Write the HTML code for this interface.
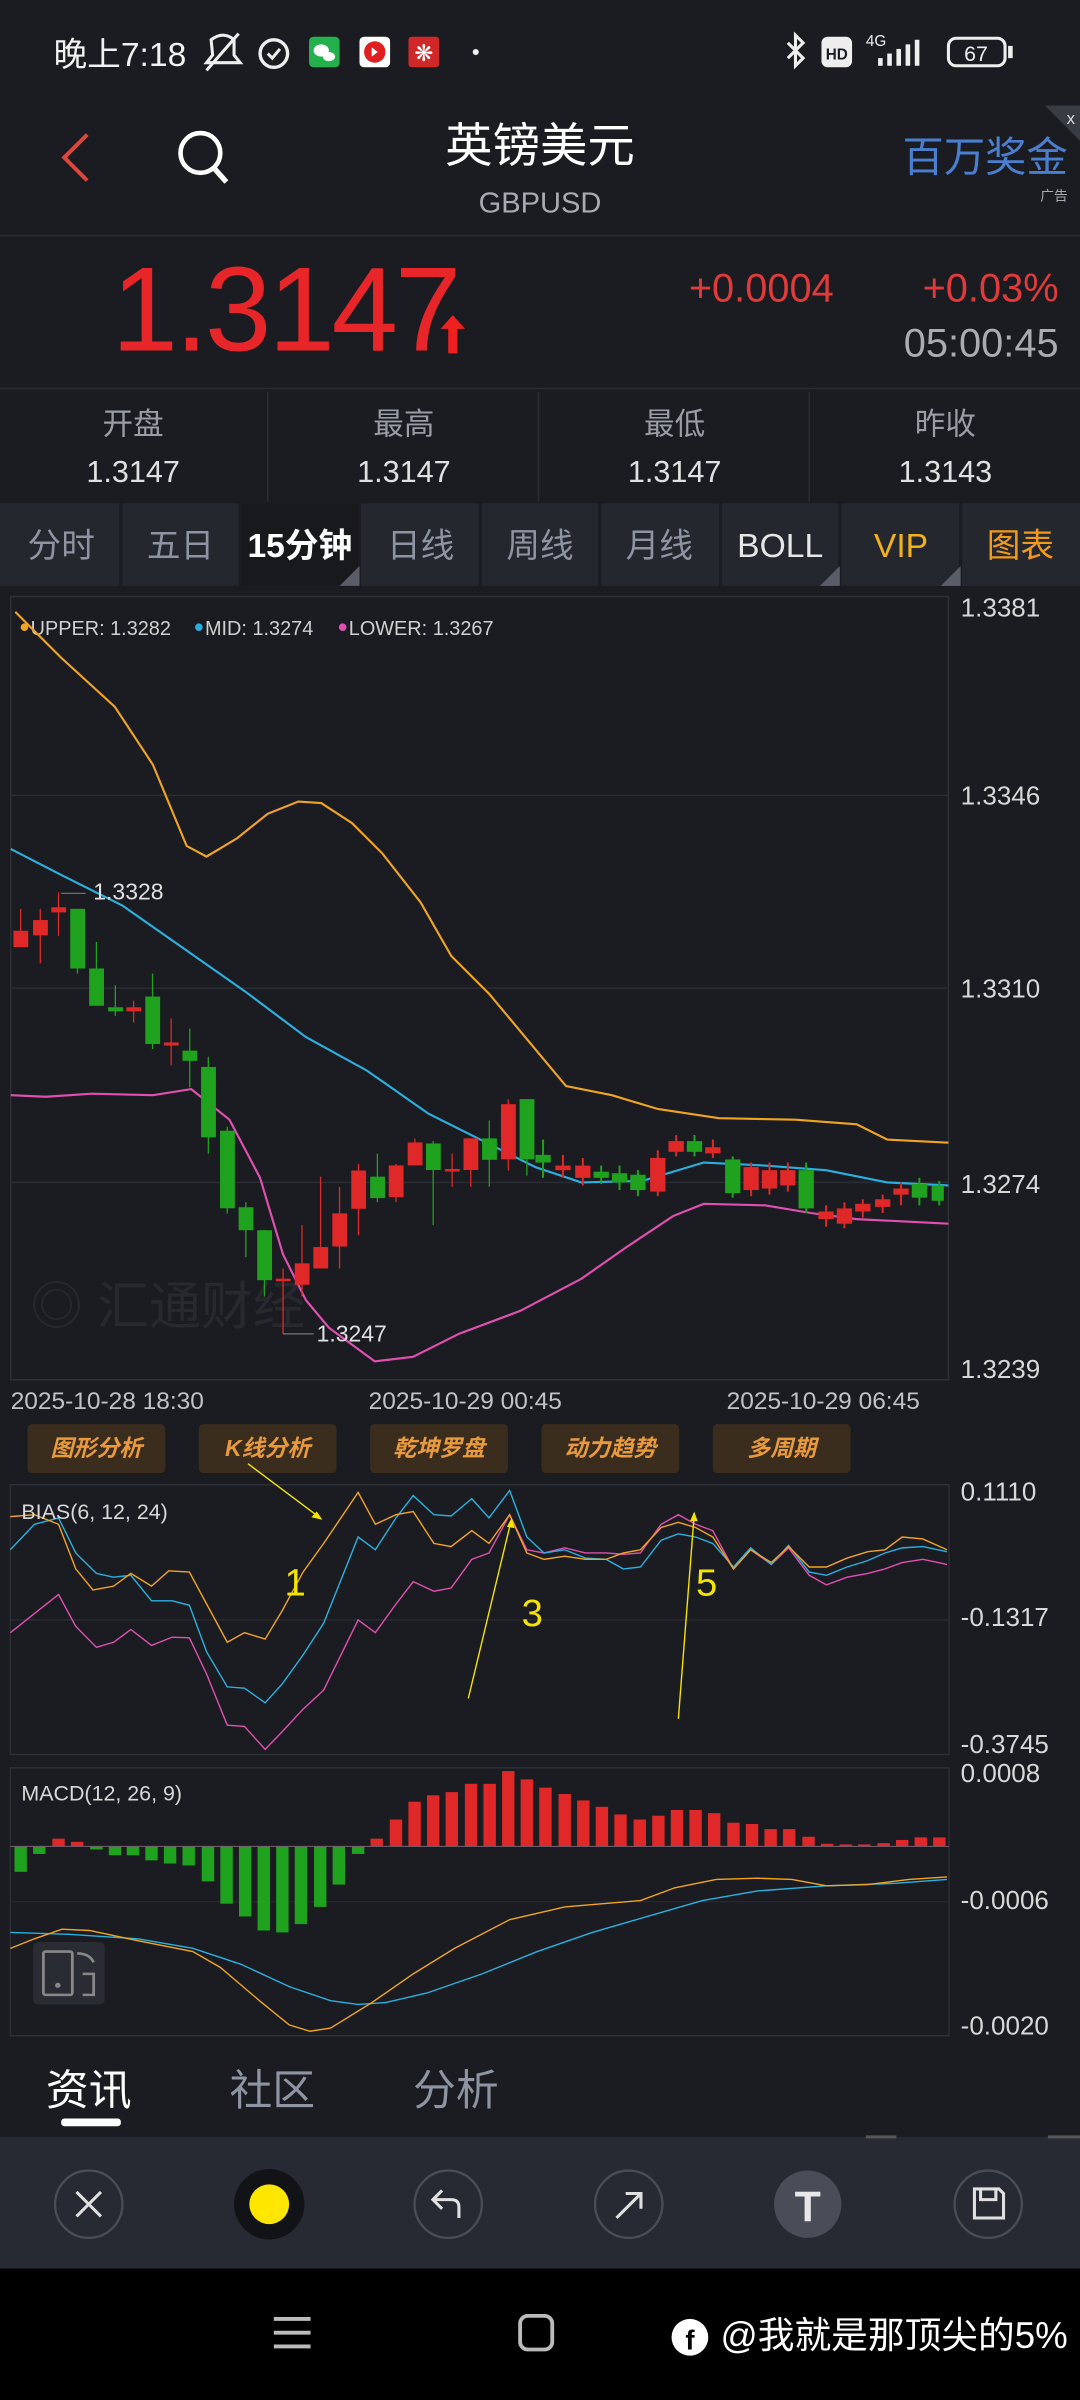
<!DOCTYPE html>
<html><head><meta charset="utf-8"><style>
html,body{margin:0;padding:0;background:#1b1c21;}
svg{display:block}
text{font-family:"Liberation Sans","Noto Sans CJK SC",sans-serif}
</style></head><body>
<svg width="1080" height="2400" viewBox="0 0 706 1569" preserveAspectRatio="none" xmlns="http://www.w3.org/2000/svg">
<rect x="0" y="0" width="706" height="1569" fill="#1b1c21"/>
<!-- status bar -->
<text x="35" y="43" font-size="22" fill="#f2f2f2">晚上7:18</text>
<path d="M138 26 q8 -6 15 0 v10 l4 5 h-22 l4 -5z M135 46 L156 22" stroke="#eee" stroke-width="2" fill="none"/>
<circle cx="179" cy="35" r="9" stroke="#eee" stroke-width="2.2" fill="none"/><path d="M175 35 l3 3 l5 -6" stroke="#eee" stroke-width="2" fill="none"/>
<rect x="202" y="24" width="20" height="20" rx="3" fill="#22b14c"/><ellipse cx="210" cy="33" rx="5" ry="4" fill="#fff"/><ellipse cx="215" cy="37" rx="4" ry="3" fill="#fff"/>
<rect x="235" y="24" width="20" height="20" rx="3" fill="#fff"/><circle cx="245" cy="34" r="7" fill="#e02020"/><path d="M243 31 l4 3 l-4 3z" fill="#fff"/>
<rect x="267" y="24" width="20" height="20" rx="2" fill="#d02828"/><text x="277" y="40" font-size="15" fill="#fff" text-anchor="middle">❋</text>
<circle cx="311" cy="34" r="2" fill="#eee"/>
<path d="M515 28 l10 10 l-5 5 v-20 l5 5 l-10 10" stroke="#eee" stroke-width="2" fill="none"/>
<rect x="537" y="24" width="20" height="20" rx="4" fill="#eee"/><text x="547" y="39" font-size="10" font-weight="bold" fill="#1b1c21" text-anchor="middle">HD</text>
<text x="566" y="30" font-size="10" fill="#eee">4G</text>
<rect x="574" y="38" width="3" height="5" fill="#eee"/><rect x="580" y="35" width="3" height="8" fill="#eee"/><rect x="586" y="32" width="3" height="11" fill="#eee"/><rect x="592" y="29" width="3" height="14" fill="#eee"/><rect x="598" y="26" width="3" height="17" fill="#eee"/>
<rect x="620" y="25" width="37" height="18" rx="5" stroke="#eee" stroke-width="2" fill="none"/><rect x="659" y="30" width="3" height="8" fill="#eee"/><text x="638" y="40" font-size="14" fill="#eee" text-anchor="middle">67</text>
<!-- header -->
<path d="M57 88 L42 103 L57 118" stroke="#e0453a" stroke-width="2.6" fill="none"/>
<circle cx="131" cy="100" r="13" stroke="#fff" stroke-width="3" fill="none"/><path d="M140 110 L148 119" stroke="#fff" stroke-width="3.5"/>
<text x="353" y="106" font-size="31" fill="#fff" text-anchor="middle">英镑美元</text>
<text x="353" y="139" font-size="19" fill="#a8abb3" text-anchor="middle">GBPUSD</text>
<text x="698" y="112" font-size="27" fill="#4a7fcf" text-anchor="end">百万奖金</text>
<text x="698" y="131" font-size="9" fill="#aaa" text-anchor="end">广告</text>
<path d="M683 69 L706 69 L706 92z" fill="#3a3c44"/><text x="700" y="81" font-size="11" fill="#ddd" text-anchor="middle">x</text>
<line x1="0" y1="154" x2="706" y2="154" stroke="#2a2c33"/>
<!-- price -->
<text x="73" y="229" font-size="78" fill="#e8262a" letter-spacing="-2">1.3147</text>
<path d="M296 206 l-8 9 h5 v16 h6 v-16 h5z" fill="#f02020"/>
<text x="545" y="197" font-size="26" fill="#e03a3a" text-anchor="end">+0.0004</text>
<text x="692" y="197" font-size="26" fill="#e03a3a" text-anchor="end">+0.03%</text>
<text x="692" y="233" font-size="26" fill="#a9acb3" text-anchor="end">05:00:45</text>
<line x1="0" y1="254" x2="706" y2="254" stroke="#2a2c33"/>
<g font-size="20" text-anchor="middle">
<text x="87" y="284" fill="#9a9da6">开盘</text><text x="87" y="315" fill="#e0e0e0">1.3147</text>
<text x="264" y="284" fill="#9a9da6">最高</text><text x="264" y="315" fill="#e0e0e0">1.3147</text>
<text x="441" y="284" fill="#9a9da6">最低</text><text x="441" y="315" fill="#e0e0e0">1.3147</text>
<text x="618" y="284" fill="#9a9da6">昨收</text><text x="618" y="315" fill="#e0e0e0">1.3143</text>
</g>
<line x1="175" y1="256" x2="175" y2="328" stroke="#2a2c33"/><line x1="352" y1="256" x2="352" y2="328" stroke="#2a2c33"/><line x1="529" y1="256" x2="529" y2="328" stroke="#2a2c33"/>
<!-- tabs -->
<rect x="0" y="329" width="706" height="54" fill="#25272f"/>
<rect x="157" y="329" width="78" height="54" fill="#18191d"/>
<g stroke="#1b1c21" stroke-width="2"><line x1="79" y1="329" x2="79" y2="383"/><line x1="157" y1="329" x2="157" y2="383"/><line x1="235" y1="329" x2="235" y2="383"/><line x1="314" y1="329" x2="314" y2="383"/><line x1="392" y1="329" x2="392" y2="383"/><line x1="471" y1="329" x2="471" y2="383"/><line x1="549" y1="329" x2="549" y2="383"/><line x1="628" y1="329" x2="628" y2="383"/></g>
<g font-size="22" text-anchor="middle">
<text x="40" y="364" fill="#8f94a3">分时</text><text x="118" y="364" fill="#8f94a3">五日</text>
<text x="196" y="364" fill="#fff" font-weight="bold">15分钟</text>
<text x="275" y="364" fill="#8f94a3">日线</text><text x="353" y="364" fill="#8f94a3">周线</text><text x="431" y="364" fill="#8f94a3">月线</text>
<text x="510" y="364" fill="#e6e6e6">BOLL</text><text x="589" y="364" fill="#f2b21a">VIP</text><text x="667" y="364" fill="#f29a1a">图表</text>
</g>
<path d="M235 370 v13 h-13z M549 370 v13 h-13z M628 370 v13 h-13z" fill="#5a5d68"/>
<!-- main chart -->
<rect x="7" y="390" width="613" height="512" fill="#1b1c21" stroke="#2e3038"/>
<g stroke="#2a2c33"><line x1="7" y1="520" x2="620" y2="520"/><line x1="7" y1="646" x2="620" y2="646"/><line x1="7" y1="773" x2="620" y2="773"/></g>
<g font-size="17" fill="#d8d8d8"><text x="628" y="403">1.3381</text><text x="628" y="526">1.3346</text><text x="628" y="652">1.3310</text><text x="628" y="780">1.3274</text><text x="628" y="901">1.3239</text></g>
<g font-size="13" fill="#d0d0d0"><circle cx="16" cy="410" r="2.5" fill="#f0a424"/><text x="20" y="415">UPPER: 1.3282</text><circle cx="130" cy="410" r="2.5" fill="#2ab0e0"/><text x="134" y="415">MID: 1.3274</text><circle cx="224" cy="410" r="2.5" fill="#e050b0"/><text x="228" y="415">LOWER: 1.3267</text></g>
<text x="20" y="866" font-size="34" fill="#28292e">◎ 汇通财经</text>
<polyline fill="none" stroke="#f0a424" stroke-width="1.4" points="10,400 40,430 75,462 100,500 122,553 135,560 155,548 175,532 195,524 210,525 230,538 250,558 275,590 295,625 320,650 345,680 370,710 400,716 430,725 470,731 520,732 560,735 580,745 620,747"/>
<polyline fill="none" stroke="#2ab0e0" stroke-width="1.4" points="7,555 40,572 80,592 120,620 160,648 200,678 240,700 280,728 320,748 350,763 380,773 420,772 460,760 500,762 540,765 580,773 620,775"/>
<polyline fill="none" stroke="#e050b0" stroke-width="1.4" points="7,716 30,717 60,715 100,716 125,712 150,732 170,770 185,820 200,850 215,868 245,890 270,887 300,872 340,857 380,836 410,815 440,795 460,787 500,788 530,793 560,797 620,800"/>
<g transform="translate(0,385.7) scale(0.2251,0.3335)" stroke-width="1.3">
<g vector-effect="non-scaling-stroke">
<line vector-effect="non-scaling-stroke" x1="60" y1="625" x2="60" y2="700" stroke="#e02828"/><rect x="39" y="668" width="43" height="32" fill="#e02828"/>
<line vector-effect="non-scaling-stroke" x1="117" y1="625" x2="117" y2="732" stroke="#e02828"/><rect x="96" y="647" width="43" height="30" fill="#e02828"/>
<line vector-effect="non-scaling-stroke" x1="170" y1="593" x2="170" y2="678" stroke="#e02828"/><rect x="149" y="622" width="43" height="10" fill="#e02828"/>
<line vector-effect="non-scaling-stroke" x1="225" y1="625" x2="225" y2="752" stroke="#1fa31f"/><rect x="204" y="625" width="43" height="117" fill="#1fa31f"/>
<line vector-effect="non-scaling-stroke" x1="280" y1="690" x2="280" y2="815" stroke="#1fa31f"/><rect x="259" y="742" width="43" height="73" fill="#1fa31f"/>
<line vector-effect="non-scaling-stroke" x1="335" y1="775" x2="335" y2="835" stroke="#1fa31f"/><rect x="314" y="818" width="43" height="8" fill="#1fa31f"/>
<line vector-effect="non-scaling-stroke" x1="388" y1="805" x2="388" y2="848" stroke="#e02828"/><rect x="367" y="818" width="43" height="8" fill="#e02828"/>
<line vector-effect="non-scaling-stroke" x1="443" y1="752" x2="443" y2="900" stroke="#1fa31f"/><rect x="422" y="797" width="43" height="93" fill="#1fa31f"/>
<line vector-effect="non-scaling-stroke" x1="497" y1="840" x2="497" y2="932" stroke="#e02828"/><rect x="476" y="887" width="43" height="6" fill="#e02828"/>
<line vector-effect="non-scaling-stroke" x1="551" y1="860" x2="551" y2="975" stroke="#1fa31f"/><rect x="530" y="903" width="43" height="20" fill="#1fa31f"/>
<line vector-effect="non-scaling-stroke" x1="605" y1="915" x2="605" y2="1105" stroke="#1fa31f"/><rect x="584" y="935" width="43" height="138" fill="#1fa31f"/>
<line vector-effect="non-scaling-stroke" x1="660" y1="1052" x2="660" y2="1222" stroke="#1fa31f"/><rect x="639" y="1060" width="43" height="152" fill="#1fa31f"/>
<line vector-effect="non-scaling-stroke" x1="714" y1="1200" x2="714" y2="1308" stroke="#1fa31f"/><rect x="693" y="1210" width="43" height="45" fill="#1fa31f"/>
<line vector-effect="non-scaling-stroke" x1="768" y1="1255" x2="768" y2="1385" stroke="#1fa31f"/><rect x="747" y="1255" width="43" height="98" fill="#1fa31f"/>
<line vector-effect="non-scaling-stroke" x1="822" y1="1330" x2="822" y2="1458" stroke="#e02828"/><rect x="801" y="1350" width="43" height="5" fill="#e02828"/>
<line vector-effect="non-scaling-stroke" x1="877" y1="1245" x2="877" y2="1385" stroke="#e02828"/><rect x="856" y="1320" width="43" height="42" fill="#e02828"/>
<line vector-effect="non-scaling-stroke" x1="931" y1="1150" x2="931" y2="1330" stroke="#e02828"/><rect x="910" y="1288" width="43" height="42" fill="#e02828"/>
<line vector-effect="non-scaling-stroke" x1="986" y1="1170" x2="986" y2="1330" stroke="#e02828"/><rect x="965" y="1222" width="43" height="65" fill="#e02828"/>
<line vector-effect="non-scaling-stroke" x1="1041" y1="1125" x2="1041" y2="1265" stroke="#e02828"/><rect x="1020" y="1138" width="43" height="75" fill="#e02828"/>
<line vector-effect="non-scaling-stroke" x1="1096" y1="1105" x2="1096" y2="1200" stroke="#1fa31f"/><rect x="1075" y="1150" width="43" height="42" fill="#1fa31f"/>
<line vector-effect="non-scaling-stroke" x1="1150" y1="1125" x2="1150" y2="1200" stroke="#e02828"/><rect x="1129" y="1128" width="43" height="62" fill="#e02828"/>
<line vector-effect="non-scaling-stroke" x1="1205" y1="1075" x2="1205" y2="1128" stroke="#e02828"/><rect x="1184" y="1083" width="43" height="45" fill="#e02828"/>
<line vector-effect="non-scaling-stroke" x1="1258" y1="1080" x2="1258" y2="1245" stroke="#1fa31f"/><rect x="1237" y="1085" width="43" height="52" fill="#1fa31f"/>
<line vector-effect="non-scaling-stroke" x1="1313" y1="1105" x2="1313" y2="1170" stroke="#e02828"/><rect x="1292" y="1135" width="43" height="5" fill="#e02828"/>
<line vector-effect="non-scaling-stroke" x1="1367" y1="1075" x2="1367" y2="1170" stroke="#e02828"/><rect x="1346" y="1075" width="43" height="62" fill="#e02828"/>
<line vector-effect="non-scaling-stroke" x1="1421" y1="1040" x2="1421" y2="1170" stroke="#1fa31f"/><rect x="1400" y="1075" width="43" height="42" fill="#1fa31f"/>
<line vector-effect="non-scaling-stroke" x1="1476" y1="998" x2="1476" y2="1138" stroke="#e02828"/><rect x="1455" y="1008" width="43" height="108" fill="#e02828"/>
<line vector-effect="non-scaling-stroke" x1="1530" y1="998" x2="1530" y2="1148" stroke="#1fa31f"/><rect x="1509" y="998" width="43" height="118" fill="#1fa31f"/>
</g>
</g>
<g stroke-width="1.3">
<line x1="355" y1="745" x2="355" y2="770" stroke="#1fa31f"/><rect x="350" y="755" width="10" height="5" fill="#1fa31f"/>
<line x1="368" y1="755" x2="368" y2="770" stroke="#e02828"/><rect x="363" y="762" width="10" height="3" fill="#e02828"/>
<line x1="381" y1="757" x2="381" y2="775" stroke="#e02828"/><rect x="376" y="762" width="10" height="8" fill="#e02828"/>
<line x1="393" y1="762" x2="393" y2="774" stroke="#1fa31f"/><rect x="388" y="766" width="10" height="4" fill="#1fa31f"/>
<line x1="405" y1="762" x2="405" y2="778" stroke="#1fa31f"/><rect x="400" y="767" width="10" height="6" fill="#1fa31f"/>
<line x1="417" y1="765" x2="417" y2="782" stroke="#1fa31f"/><rect x="412" y="768" width="10" height="10" fill="#1fa31f"/>
<line x1="430" y1="752" x2="430" y2="782" stroke="#e02828"/><rect x="425" y="757" width="10" height="22" fill="#e02828"/>
<line x1="442" y1="742" x2="442" y2="756" stroke="#e02828"/><rect x="437" y="746" width="10" height="7" fill="#e02828"/>
<line x1="454" y1="742" x2="454" y2="756" stroke="#1fa31f"/><rect x="449" y="746" width="10" height="7" fill="#1fa31f"/>
<line x1="466" y1="745" x2="466" y2="757" stroke="#e02828"/><rect x="461" y="750" width="10" height="4" fill="#e02828"/>
<line x1="479" y1="756" x2="479" y2="783" stroke="#1fa31f"/><rect x="474" y="758" width="10" height="22" fill="#1fa31f"/>
<line x1="491" y1="760" x2="491" y2="782" stroke="#e02828"/><rect x="486" y="763" width="10" height="15" fill="#e02828"/>
<line x1="503" y1="760" x2="503" y2="781" stroke="#e02828"/><rect x="498" y="765" width="10" height="12" fill="#e02828"/>
<line x1="515" y1="760" x2="515" y2="779" stroke="#e02828"/><rect x="510" y="765" width="10" height="10" fill="#e02828"/>
<line x1="527" y1="760" x2="527" y2="793" stroke="#1fa31f"/><rect x="522" y="765" width="10" height="25" fill="#1fa31f"/>
<line x1="540" y1="788" x2="540" y2="802" stroke="#e02828"/><rect x="535" y="792" width="10" height="5" fill="#e02828"/>
<line x1="552" y1="786" x2="552" y2="803" stroke="#e02828"/><rect x="547" y="790" width="10" height="10" fill="#e02828"/>
<line x1="564" y1="784" x2="564" y2="796" stroke="#e02828"/><rect x="559" y="787" width="10" height="5" fill="#e02828"/>
<line x1="577" y1="781" x2="577" y2="793" stroke="#e02828"/><rect x="572" y="784" width="10" height="5" fill="#e02828"/>
<line x1="589" y1="773" x2="589" y2="788" stroke="#e02828"/><rect x="584" y="777" width="10" height="4" fill="#e02828"/>
<line x1="601" y1="770" x2="601" y2="788" stroke="#1fa31f"/><rect x="596" y="774" width="10" height="9" fill="#1fa31f"/>
<line x1="614" y1="772" x2="614" y2="788" stroke="#1fa31f"/><rect x="609" y="775" width="8" height="10" fill="#1fa31f"/>
</g>
<path d="M40 584 h16" stroke="#777" stroke-width="0.8" fill="none"/>
<text x="61" y="588" font-size="15" fill="#e0e0e0">1.3328</text>
<path d="M185 872 h20" stroke="#777" stroke-width="0.8"/>
<text x="207" y="877" font-size="15" fill="#e0e0e0">1.3247</text>
<g font-size="16" fill="#bfc2c8"><text x="7" y="921">2025-10-28 18:30</text><text x="241" y="921">2025-10-29 00:45</text><text x="475" y="921">2025-10-29 06:45</text></g>
<!-- buttons -->
<g font-size="15" font-weight="bold" font-style="italic" fill="#e89a3c" text-anchor="middle">
<rect x="18" y="931" width="90" height="32" rx="3" fill="#3b2d1e"/><text x="63" y="952">图形分析</text>
<rect x="130" y="931" width="90" height="32" rx="3" fill="#3b2d1e"/><text x="175" y="952">K线分析</text>
<rect x="242" y="931" width="90" height="32" rx="3" fill="#3b2d1e"/><text x="287" y="952">乾坤罗盘</text>
<rect x="354" y="931" width="90" height="32" rx="3" fill="#3b2d1e"/><text x="399" y="952">动力趋势</text>
<rect x="466" y="931" width="90" height="32" rx="3" fill="#3b2d1e"/><text x="511" y="952">多周期</text>
</g>
<!-- axis labels -->
<g font-size="17" fill="#d8d8d8"><text x="628" y="981">0.1110</text><text x="628" y="1063">-0.1317</text><text x="628" y="1146">-0.3745</text>
<text x="628" y="1165">0.0008</text><text x="628" y="1248">-0.0006</text><text x="628" y="1330">-0.0020</text></g>
<!-- BIAS -->
<g transform="translate(0,915.2) scale(0.4502,0.4169)" fill="none" stroke-width="1.4">
<rect vector-effect="non-scaling-stroke" x="15" y="133" width="1363" height="423" stroke="#2e3038"/>
<line vector-effect="non-scaling-stroke" x1="15" y1="345" x2="1378" y2="345" stroke="#2a2c33"/>
<polyline vector-effect="non-scaling-stroke" stroke="#e050b0" points="15,365 50,335 85,305 110,355 140,388 165,380 190,360 220,385 250,372 275,373 300,430 330,510 355,512 385,548 410,520 440,485 470,455 520,345 545,365 575,320 600,285 630,300 655,295 685,250 710,240 740,180 765,235 790,240 820,232 850,240 880,240 905,242 930,240 960,195 985,180 1010,195 1035,205 1065,265 1090,235 1120,258 1145,232 1175,275 1200,290 1230,278 1260,272 1285,265 1310,255 1340,250 1375,258"/>
<polyline vector-effect="non-scaling-stroke" stroke="#2ab0e0" points="15,235 50,195 85,185 110,240 140,272 165,278 190,275 220,315 250,315 275,322 300,395 330,450 355,452 385,475 410,445 440,400 470,350 520,215 545,235 575,185 600,150 630,180 655,182 685,155 710,185 740,142 765,215 790,240 820,235 850,248 880,250 905,265 930,262 960,220 985,210 1010,215 1035,225 1065,262 1090,232 1120,258 1145,228 1175,270 1200,275 1230,262 1260,252 1285,240 1310,232 1340,230 1375,238"/>
<polyline vector-effect="non-scaling-stroke" stroke="#f0a424" points="15,183 50,180 85,195 110,265 135,298 165,292 190,272 220,292 245,268 275,270 300,320 330,380 355,365 385,375 410,330 440,270 470,225 520,145 545,195 575,180 600,175 630,225 655,230 685,205 710,225 740,180 765,240 790,250 820,245 850,250 880,250 905,240 930,235 960,200 985,192 1010,200 1035,215 1065,265 1090,235 1120,255 1145,230 1175,262 1200,262 1230,248 1260,238 1285,235 1310,215 1340,218 1375,235"/>
<g stroke="#f5e400"><line vector-effect="non-scaling-stroke" x1="360" y1="100" x2="465" y2="185"/><line vector-effect="non-scaling-stroke" x1="680" y1="468" x2="742" y2="190"/><line vector-effect="non-scaling-stroke" x1="985" y1="500" x2="1008" y2="180"/></g>
<path d="M468 188 l-16 -4 l8 -9z M743 185 l4 16 l-11 -2z M1008 175 l5 15 l-11 0z" fill="#f5e400"/>
</g>
<text x="14" y="993" font-size="14" fill="#d8d8d8">BIAS(6, 12, 24)</text>
<g font-size="25" fill="#f5e400"><text x="186" y="1043">1</text><text x="341" y="1063">3</text><text x="455" y="1043">5</text></g>
<!-- MACD -->
<g transform="translate(0,915.2) scale(0.4502,0.4169)">
<rect vector-effect="non-scaling-stroke" x="15" y="577" width="1363" height="420" stroke="#2e3038" stroke-width="1.4" fill="none"/>
<line vector-effect="non-scaling-stroke" x1="15" y1="787" x2="1378" y2="787" stroke="#2a2c33" stroke-width="1"/>
<g fill="#1fa31f">
<rect x="21" y="700" width="18" height="40"/><rect x="48" y="700" width="18" height="12"/><rect x="131" y="700" width="18" height="5"/><rect x="158" y="700" width="18" height="14"/><rect x="184" y="700" width="18" height="14"/><rect x="211" y="700" width="18" height="22"/><rect x="238" y="700" width="18" height="27"/><rect x="265" y="700" width="18" height="30"/><rect x="293" y="700" width="18" height="55"/><rect x="320" y="700" width="18" height="90"/><rect x="347" y="700" width="18" height="110"/><rect x="374" y="700" width="18" height="132"/><rect x="401" y="700" width="18" height="135"/><rect x="428" y="700" width="18" height="122"/><rect x="456" y="700" width="18" height="95"/><rect x="483" y="700" width="18" height="60"/><rect x="511" y="700" width="18" height="12"/>
</g>
<g fill="#e02828">
<rect x="76" y="688" width="18" height="12"/><rect x="103" y="693" width="18" height="7"/><rect x="538" y="688" width="18" height="12"/><rect x="566" y="658" width="18" height="42"/><rect x="593" y="630" width="18" height="70"/><rect x="620" y="620" width="18" height="80"/><rect x="647" y="615" width="18" height="85"/><rect x="675" y="602" width="18" height="98"/><rect x="702" y="602" width="18" height="98"/><rect x="729" y="582" width="18" height="118"/><rect x="756" y="595" width="18" height="105"/><rect x="783" y="608" width="18" height="92"/><rect x="811" y="618" width="18" height="82"/><rect x="838" y="628" width="18" height="72"/><rect x="865" y="638" width="18" height="62"/><rect x="892" y="650" width="18" height="50"/><rect x="920" y="658" width="18" height="42"/><rect x="947" y="652" width="18" height="48"/><rect x="974" y="643" width="18" height="57"/><rect x="1001" y="643" width="18" height="57"/><rect x="1028" y="648" width="18" height="52"/><rect x="1056" y="663" width="18" height="37"/><rect x="1083" y="665" width="18" height="35"/><rect x="1110" y="673" width="18" height="27"/><rect x="1137" y="673" width="18" height="27"/><rect x="1165" y="685" width="18" height="15"/><rect x="1192" y="696" width="18" height="4"/><rect x="1219" y="697" width="18" height="3"/><rect x="1246" y="697" width="18" height="3"/><rect x="1274" y="695" width="18" height="5"/><rect x="1301" y="690" width="18" height="10"/><rect x="1328" y="686" width="18" height="14"/><rect x="1355" y="686" width="18" height="14"/>
</g>
<line vector-effect="non-scaling-stroke" x1="15" y1="700" x2="1378" y2="700" stroke="#7a6070" stroke-width="1"/>
<polyline vector-effect="non-scaling-stroke" fill="none" stroke="#2ab0e0" stroke-width="1.4" points="15,835 100,838 200,845 280,860 350,885 420,920 480,942 520,948 560,945 620,930 700,900 780,865 860,835 940,810 1020,785 1100,770 1200,762 1300,758 1375,752"/>
<polyline vector-effect="non-scaling-stroke" fill="none" stroke="#f0a424" stroke-width="1.4" points="15,860 50,845 90,830 130,832 200,848 280,865 320,890 380,945 420,980 450,990 480,985 540,945 600,900 660,860 740,815 820,795 930,785 980,765 1040,752 1100,750 1150,752 1200,762 1260,760 1320,752 1375,748"/>
<rect x="48" y="850" width="104" height="98" rx="8" fill="#2a2c33"/>
<rect x="63" y="865" width="42" height="68" rx="3" fill="none" stroke="#888" stroke-width="4"/><circle cx="84" cy="918" r="4" fill="#888"/>
<path d="M120 900 h16 v33 h-16 M112 868 q18 0 24 14" fill="none" stroke="#888" stroke-width="4"/>
</g>
<text x="14" y="1177" font-size="14" fill="#d8d8d8">MACD(12, 26, 9)</text>
<!-- bottom tabs -->
<g font-size="28"><text x="30" y="1376" fill="#fff">资讯</text><text x="150" y="1376" fill="#8f94a3">社区</text><text x="270" y="1376" fill="#8f94a3">分析</text></g>
<rect x="40" y="1385" width="39" height="5" rx="2" fill="#fff"/>
<!-- toolbar -->
<rect x="0" y="1397" width="706" height="86" fill="#282a33"/>
<line x1="566" y1="1397" x2="586" y2="1397" stroke="#555" stroke-width="2"/><line x1="685" y1="1397" x2="706" y2="1397" stroke="#555" stroke-width="2"/>
<g fill="none" stroke="#4a4d58" stroke-width="1.5">
<circle cx="58" cy="1441" r="22"/><circle cx="293" cy="1441" r="22"/><circle cx="411" cy="1441" r="22"/><circle cx="646" cy="1441" r="22"/>
</g>
<path d="M50 1433 l16 16 M66 1433 l-16 16" stroke="#e0e0e0" stroke-width="2"/>
<circle cx="176" cy="1441" r="23" fill="#121316"/><circle cx="176" cy="1441" r="13" fill="#ffe600"/>
<path d="M289 1432 l-6 6 l6 6 M283 1438 h12 q5 0 5 5 v7" stroke="#e0e0e0" stroke-width="2" fill="none"/>
<path d="M403 1450 l16 -16 M409 1434 h10 v10" stroke="#e0e0e0" stroke-width="2" fill="none"/>
<circle cx="528" cy="1441" r="22" fill="#4a4d58"/><text x="528" y="1452" font-size="28" font-family="Liberation Serif" font-weight="bold" fill="#e8e8e8" text-anchor="middle">T</text>
<path d="M637 1431 h16 l3 3 v16 h-19z M641 1431 v7 h10 v-7" stroke="#e0e0e0" stroke-width="2" fill="none"/>
<!-- nav bar -->
<rect x="0" y="1483" width="706" height="86" fill="#000"/>
<path d="M179 1516 h24 M179 1525 h24 M179 1534 h24" stroke="#bbb" stroke-width="2.5"/>
<rect x="340" y="1514" width="21" height="22" rx="5" fill="none" stroke="#bbb" stroke-width="2.5"/>
<circle cx="451" cy="1528" r="12" fill="#fff"/><text x="451" y="1536" font-size="18" font-weight="bold" fill="#000" text-anchor="middle">f</text>
<text x="698" y="1535" font-size="24" fill="#fff" text-anchor="end">@我就是那顶尖的5%</text>
</svg>
</body></html>
